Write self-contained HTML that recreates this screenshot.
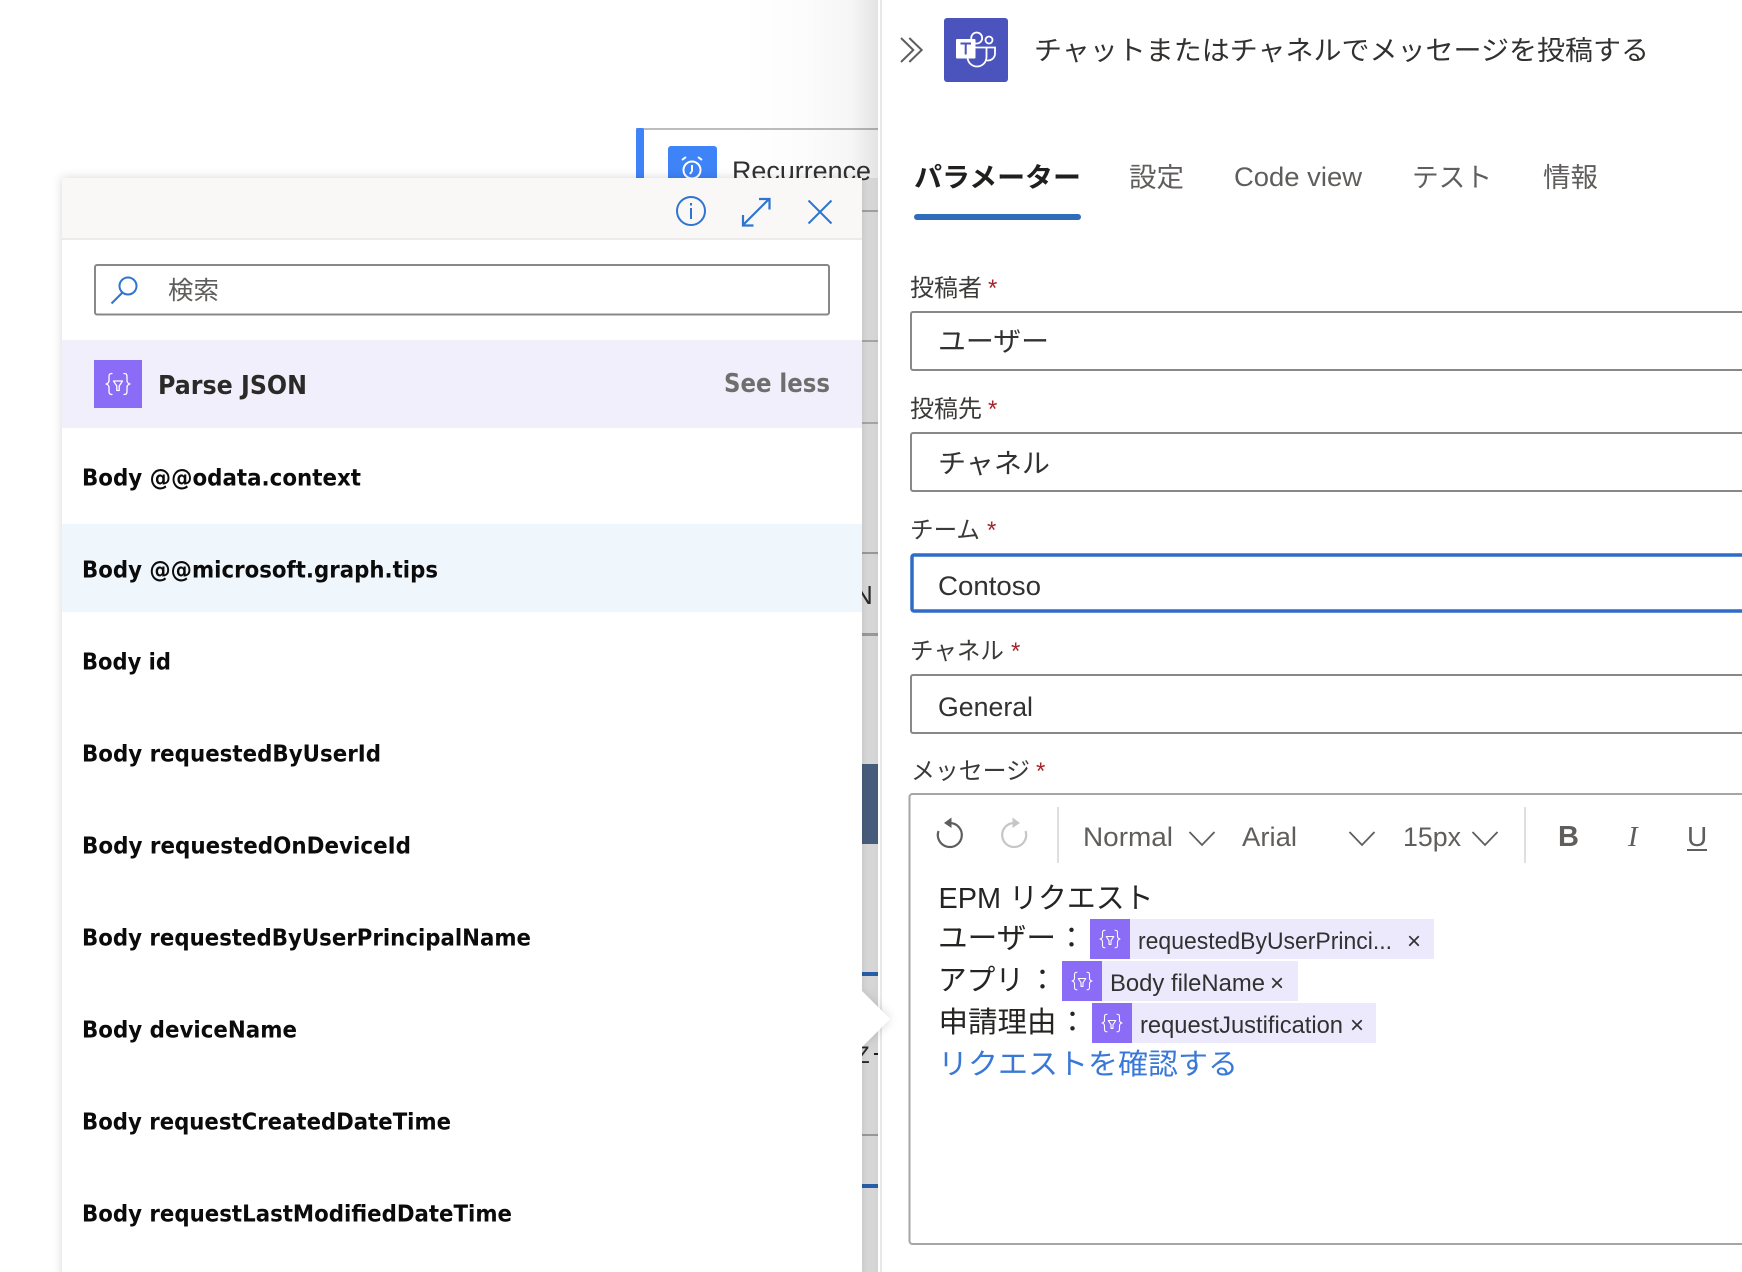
<!DOCTYPE html>
<html lang="ja"><head><meta charset="utf-8"><title>チャットまたはチャネルでメッセージを投稿する</title>
<style>
html,body{margin:0;padding:0;background:#fff;width:1742px;height:1272px;overflow:hidden}
svg{display:block}
text{font-family:"Liberation Sans","Noto Sans CJK JP",sans-serif;fill:#323130}
.b{font-family:"DejaVu Sans",sans-serif;font-weight:700;font-size:23.500px;fill:#0b0b0b}
.t{font-size:27px;font-weight:400}
.l{font-size:24px;font-weight:400;fill:#3b3a39}
.s{font-size:24px;fill:#a4262c}
.m{font-size:29px;font-weight:400;fill:#252423}
.c{font-size:24px;fill:#323130}
.tb{font-size:27px;fill:#605e5c}
</style></head><body>
<svg width="1742" height="1272" viewBox="0 0 1742 1272" xmlns="http://www.w3.org/2000/svg">
<defs>
<linearGradient id="sh" gradientUnits="userSpaceOnUse" x1="740" x2="878" y1="0" y2="0"><stop offset="0" stop-color="#000" stop-opacity="0"/><stop offset=".45" stop-color="#000" stop-opacity=".012"/><stop offset=".8" stop-color="#000" stop-opacity=".035"/><stop offset="1" stop-color="#000" stop-opacity=".11"/></linearGradient>
<filter id="ps" x="-5%" y="-5%" width="110%" height="110%"><feDropShadow dx="0" dy="0" stdDeviation="5" flood-color="#000" flood-opacity=".16"/></filter>
<symbol id="fx" viewBox="0 0 48 48">
<g fill="none" stroke="#fff" stroke-width="1.3" stroke-linejoin="round" stroke-linecap="round">
<path d="M18 13.500c-3 0-3 1.500-3 4v3c0 2-1 3-3 3.500 2 .5 3 1.500 3 3.500v3c0 2.500 0 4 3 4"/>
<path d="M30 13.500c3 0 3 1.500 3 4v3c0 2 1 3 3 3.500-2 .5-3 1.500-3 3.500v3c0 2.500 0 4-3 4"/>
<path d="M19.500 21h9l-3.300 5v4.500h-2.400V26z"/>
</g></symbol>
</defs>

<!-- background canvas cards -->
<rect x="636" y="128" width="242" height="2" fill="#bdbdbd"/>
<rect x="636" y="128" width="8" height="60" rx="2" fill="#3f83f8"/>
<rect x="668" y="146" width="49" height="50" rx="3" fill="#3f83f8"/>
<g fill="none" stroke="#fff" stroke-width="2"><circle cx="692" cy="170" r="8.500"/><path d="M692 165v6l-2 3M682 160l4-3M702 160l-4-3"/></g>
<text x="732" y="180" font-size="27" textLength="139" lengthAdjust="spacingAndGlyphs">Recurrence</text>
<rect x="644" y="210" width="234" height="2" fill="#bdbdbd"/>
<rect x="644" y="340" width="234" height="2" fill="#c4c4c4"/>
<rect x="644" y="422" width="234" height="2" fill="#c4c4c4"/>
<rect x="644" y="552" width="234" height="2" fill="#b5b5b5"/>
<text x="854" y="604" font-size="26" fill="#222">N</text>
<rect x="644" y="633" width="234" height="3" fill="#b5b5b5"/>
<rect x="644" y="764" width="234" height="80" fill="#556e93"/>
<rect x="644" y="972" width="234" height="4" fill="#2f6fc9"/>
<text x="855" y="1063" font-size="24" fill="#222">Z</text>
<rect x="874" y="1053" width="4" height="2" fill="#222"/>
<rect x="644" y="1134" width="234" height="2" fill="#b5b5b5"/>
<rect x="644" y="1184" width="234" height="4" fill="#2f6fc9"/>

<!-- shadow from the right pane -->
<rect x="740" y="0" width="138" height="1272" fill="url(#sh)"/>
<rect x="858" y="178" width="20" height="1094" fill="#000" fill-opacity=".07"/>

<!-- right pane edge -->
<rect x="880" y="0" width="2" height="1272" fill="#e8e8e8"/>

<!-- dynamic content panel -->
<g filter="url(#ps)">
<rect x="62" y="178" width="800" height="1100" fill="#fff"/>
<polygon points="861,990 890,1019 861,1048" fill="#fff"/>
</g>
<rect x="62" y="178" width="800" height="60" fill="#f9f8f7"/>
<rect x="62" y="238" width="800" height="2" fill="#edebe9"/>

<g fill="none" stroke="#2f75d0" stroke-width="2">
<circle cx="691" cy="211" r="14"/>
<path d="M691 208v11M691 203v2.500"/>
<path d="M743 225L769 199M743 215v10.500h10.500M759 199h10.500v10.500" stroke-width="2.200"/>
<path d="M808.500 200.500L831.500 223.500M831.500 200.500L808.500 223.500"/>
</g>

<rect x="95" y="265" width="734" height="49.500" rx="2" fill="#fff" stroke="#8a8886" stroke-width="2"/>
<g fill="none" stroke="#2f75d0" stroke-width="2"><circle cx="128" cy="286" r="8.500"/><path d="M122 293L111.500 303.500"/></g>
<text x="168" y="299" font-size="25" textLength="51" lengthAdjust="spacingAndGlyphs" style="fill:#605e5c">検索</text>

<rect x="62" y="340" width="800" height="88" fill="#f1effc"/>
<rect x="94" y="360" width="48" height="48" fill="#8a6cf6"/>
<use href="#fx" x="94" y="360" width="48" height="48"/>
<text class="b" x="158" y="394" textLength="149" lengthAdjust="spacingAndGlyphs" style="font-size:26px;fill:#2b2a28">Parse JSON</text>
<text class="b" x="724" y="392" textLength="106" lengthAdjust="spacingAndGlyphs" style="font-size:26px;fill:#6f6e6d">See less</text>

<rect x="62" y="524" width="800" height="88" fill="#eff6fc"/>
<text class="b" x="82" y="485.500" textLength="279" lengthAdjust="spacingAndGlyphs">Body @@odata.context</text>
<text class="b" x="82" y="577.500" textLength="356" lengthAdjust="spacingAndGlyphs">Body @@microsoft.graph.tips</text>
<text class="b" x="82" y="669.500" textLength="89" lengthAdjust="spacingAndGlyphs">Body id</text>
<text class="b" x="82" y="761.500" textLength="299" lengthAdjust="spacingAndGlyphs">Body requestedByUserId</text>
<text class="b" x="82" y="853.500" textLength="329" lengthAdjust="spacingAndGlyphs">Body requestedOnDeviceId</text>
<text class="b" x="82" y="945.500" textLength="449" lengthAdjust="spacingAndGlyphs">Body requestedByUserPrincipalName</text>
<text class="b" x="82" y="1037.500" textLength="215" lengthAdjust="spacingAndGlyphs">Body deviceName</text>
<text class="b" x="82" y="1129.500" textLength="369" lengthAdjust="spacingAndGlyphs">Body requestCreatedDateTime</text>
<text class="b" x="82" y="1221.500" textLength="430" lengthAdjust="spacingAndGlyphs">Body requestLastModifiedDateTime</text>

<!-- right pane header -->
<path d="M901 38l12.300 12L901 62M909.300 38l12.400 12-12.400 12" fill="none" stroke="#605e5c" stroke-width="2"/>
<rect x="944" y="18" width="64" height="64" rx="3" fill="#4b53bc"/>
<g fill="none" stroke="#fff" stroke-width="1.800">
<circle cx="976.700" cy="38" r="5.500"/>
<circle cx="989" cy="40" r="3.500"/>
<path d="M967.500 47.500h19v9.500a9.500 9.500 0 0 1-19 0zM986.500 47.500h8.500v6a7 7 0 0 1-9 6.700"/>
</g>
<rect x="956" y="39" width="19.500" height="19.500" rx="1" fill="#fff"/>
<path d="M960.500 43.500h10.500M965.700 43.500v11" fill="none" stroke="#4b53bc" stroke-width="2"/>
<text class="t" x="1034" y="60" textLength="615" lengthAdjust="spacingAndGlyphs">チャットまたはチャネルでメッセージを投稿する</text>

<!-- tabs -->
<text class="t" x="914" y="187" textLength="167" lengthAdjust="spacingAndGlyphs" style="font-weight:700;fill:#201f1e">パラメーター</text>
<text class="t" x="1129" y="187" textLength="55" lengthAdjust="spacingAndGlyphs" style="fill:#605e5c">設定</text>
<text class="t" x="1234" y="186" textLength="128" lengthAdjust="spacingAndGlyphs" style="fill:#605e5c">Code view</text>
<text class="t" x="1412" y="187" textLength="80" lengthAdjust="spacingAndGlyphs" style="fill:#605e5c">テスト</text>
<text class="t" x="1543" y="187" textLength="55" lengthAdjust="spacingAndGlyphs" style="fill:#605e5c">情報</text>
<rect x="914" y="214" width="167" height="6" rx="3" fill="#2f6cb9"/>

<!-- fields -->
<text class="l" x="910" y="296" textLength="72" lengthAdjust="spacingAndGlyphs">投稿者</text><text class="s" x="988" y="296">*</text>
<rect x="911" y="312" width="840" height="58" rx="2" fill="#fff" stroke="#8a8886" stroke-width="2"/>
<text class="t" x="938" y="351" textLength="111" lengthAdjust="spacingAndGlyphs">ユーザー</text>

<text class="l" x="910" y="417" textLength="72" lengthAdjust="spacingAndGlyphs">投稿先</text><text class="s" x="988" y="417">*</text>
<rect x="911" y="433" width="840" height="58" rx="2" fill="#fff" stroke="#8a8886" stroke-width="2"/>
<text class="t" x="938" y="473" textLength="112" lengthAdjust="spacingAndGlyphs">チャネル</text>

<text class="l" x="910" y="538" textLength="70" lengthAdjust="spacingAndGlyphs">チーム</text><text class="s" x="987" y="538">*</text>
<rect x="912" y="555" width="840" height="56" rx="2" fill="#fff" stroke="#2f6cc8" stroke-width="3.500"/>
<text class="t" x="938" y="595" textLength="103" lengthAdjust="spacingAndGlyphs">Contoso</text>

<text class="l" x="910" y="659" textLength="94" lengthAdjust="spacingAndGlyphs">チャネル</text><text class="s" x="1011" y="659">*</text>
<rect x="911" y="675" width="840" height="58" rx="2" fill="#fff" stroke="#8a8886" stroke-width="2"/>
<text class="t" x="938" y="716" textLength="95" lengthAdjust="spacingAndGlyphs">General</text>

<text class="l" x="911" y="779" textLength="119" lengthAdjust="spacingAndGlyphs">メッセージ</text><text class="s" x="1036" y="779">*</text>
<rect x="909.500" y="794" width="850" height="450" rx="3" fill="#fff" stroke="#a6a6a6" stroke-width="2"/>

<!-- toolbar -->
<g fill="none" stroke-width="2.200">
<path d="M950 823a12 12 0 1 1-11.500 8" stroke="#605e5c"/>
<path d="M1014 823a12 12 0 1 0 11.500 8" stroke="#c8c6c4"/>
<path d="M1189.500 832l12.500 13 12.500-13M1349.500 832l12.500 13 12.500-13M1472.500 832l12.500 13 12.500-13" stroke="#605e5c" stroke-width="1.800"/>
</g>
<path d="M944 823l7.500-5.500v10.500z" fill="#605e5c"/>
<path d="M1020 823l-7.500-5.500v10.500z" fill="#c8c6c4"/>
<rect x="1057" y="807" width="2" height="56" fill="#e1dfdd"/>
<rect x="1524" y="807" width="2" height="56" fill="#e1dfdd"/>
<text class="tb" x="1083" y="846" textLength="90" lengthAdjust="spacingAndGlyphs">Normal</text>
<text class="tb" x="1242" y="846" textLength="55" lengthAdjust="spacingAndGlyphs">Arial</text>
<text class="tb" x="1403" y="846" textLength="58" lengthAdjust="spacingAndGlyphs">15px</text>
<text x="1558" y="846" font-size="29" font-weight="700" style="fill:#605e5c">B</text>
<text x="1628" y="846" font-size="29" font-style="italic" style="font-family:'Liberation Serif',serif;fill:#605e5c">I</text>
<text x="1687" y="846" font-size="28" style="fill:#605e5c">U</text>
<rect x="1687" y="849" width="20" height="2" fill="#605e5c"/>

<!-- message body -->
<text class="m" x="938.500" y="908" textLength="215" lengthAdjust="spacingAndGlyphs">EPM リクエスト</text>
<text class="m" x="938" y="948" textLength="118" lengthAdjust="spacingAndGlyphs">ユーザー</text><text class="m" x="1057" y="948">：</text>
<rect x="1090" y="919" width="344" height="40" fill="#ece9fd"/><rect x="1090" y="919" width="40" height="40" fill="#8a6cf6"/><use href="#fx" x="1090" y="919" width="40" height="40"/>
<text class="c" x="1138" y="949" textLength="254" lengthAdjust="spacingAndGlyphs">requestedByUserPrinci...</text>
<text class="c" x="1407" y="949" font-size="22">×</text>
<text class="m" x="938" y="990" textLength="86" lengthAdjust="spacingAndGlyphs">アプリ</text><text class="m" x="1028" y="990">：</text>
<rect x="1062" y="961" width="236" height="40" fill="#ece9fd"/><rect x="1062" y="961" width="40" height="40" fill="#8a6cf6"/><use href="#fx" x="1062" y="961" width="40" height="40"/>
<text class="c" x="1110" y="991" textLength="155" lengthAdjust="spacingAndGlyphs">Body fileName</text>
<text class="c" x="1270" y="991">×</text>
<text class="m" x="938.500" y="1032" textLength="118" lengthAdjust="spacingAndGlyphs">申請理由</text><text class="m" x="1058" y="1032">：</text>
<rect x="1092" y="1003" width="284" height="40" fill="#ece9fd"/><rect x="1092" y="1003" width="40" height="40" fill="#8a6cf6"/><use href="#fx" x="1092" y="1003" width="40" height="40"/>
<text class="c" x="1140" y="1033" textLength="203" lengthAdjust="spacingAndGlyphs">requestJustification</text>
<text class="c" x="1350" y="1033">×</text>
<text class="m" x="938" y="1074" textLength="300" lengthAdjust="spacingAndGlyphs" style="fill:#3a78d8">リクエストを確認する</text>
</svg>
</body></html>
